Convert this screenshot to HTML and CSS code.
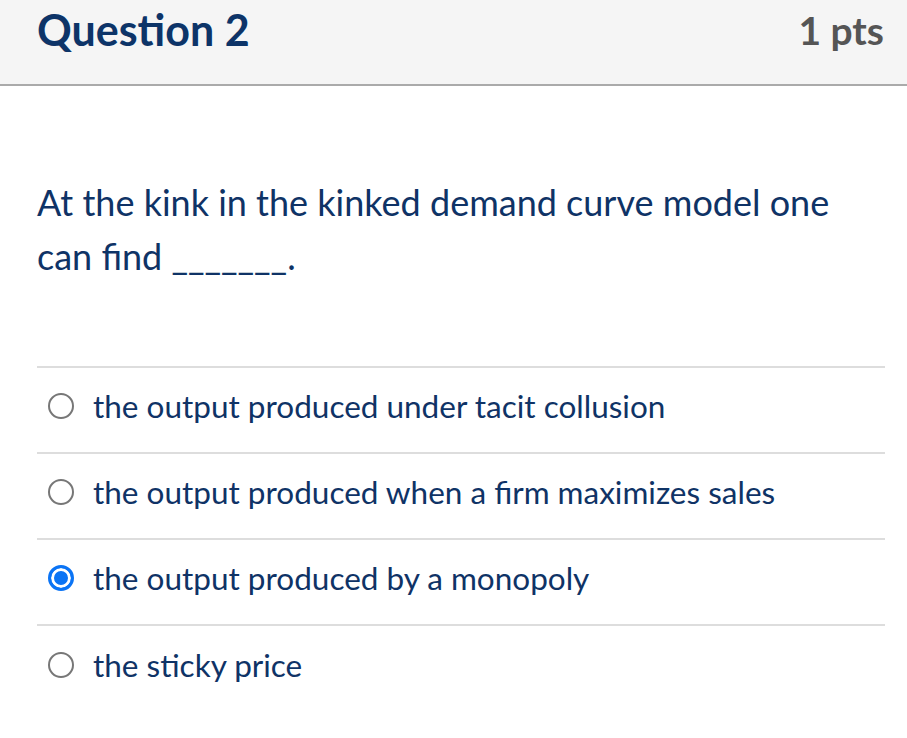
FILE: index.html
```html
<!DOCTYPE html>
<html lang="en">
<head>
  <meta charset="UTF-8">
  <meta name="viewport" content="width=device-width, initial-scale=1.0">
  <title>Question 2</title>
  <link rel="stylesheet" href="styles.css">
</head>
<body>
  <div class="question">
    <div class="question-header">
      <h2 class="question-title">Question 2</h2>
      <span class="question-points">1 pts</span>
    </div>
    <div class="question-body">
      <p class="question-text">At the kink in the kinked demand curve model one can find _______.</p>
      <div class="answers">
        <label class="answer"><span class="radio"></span>the output produced under tacit collusion</label>
        <label class="answer"><span class="radio"></span>the output produced when a firm maximizes sales</label>
        <label class="answer"><span class="radio checked"></span>the output produced by a monopoly</label>
        <label class="answer"><span class="radio"></span>the sticky price</label>
      </div>
    </div>
  </div>
</body>
</html>
```

FILE: styles.css
```css
* {
  margin: 0;
  padding: 0;
  box-sizing: border-box;
}

body {
  background: #ffffff;
  font-family: 'Lato', 'Noto Sans', sans-serif;
  color: #0f3366;
}

.question-header {
  display: flex;
  justify-content: space-between;
  align-items: flex-start;
  height: 86px;
  padding: 4px 23px 0 37px;
  background: #f5f5f5;
  border-bottom: 2px solid #aaaaaa;
}

.question-title {
  font-size: 43px;
  font-weight: 700;
  line-height: 52px;
  color: #0d3468;
}

.question-points {
  font-size: 39px;
  font-weight: 700;
  line-height: 52px;
  color: #555555;
}

.question-body {
  padding: 0 22px 0 37px;
}

.question-text {
  padding-top: 89px;
  font-size: 36px;
  line-height: 54px;
  margin-bottom: 83px;
}

.answers {
  border-top: 2px solid #dddddd;
}

.answer {
  display: flex;
  align-items: center;
  height: 86px;
  padding-bottom: 8px;
  border-bottom: 2px solid #dddddd;
  font-size: 31.5px;
  color: #0f3366;
}

.answer:last-child {
  border-bottom: none;
}

.radio {
  width: 26px;
  height: 26px;
  border: 2.5px solid #777777;
  border-radius: 50%;
  margin: 0 19px 0 11px;
  flex-shrink: 0;
}

.radio.checked {
  border: 3px solid #0b74f5;
  background: #0b74f5;
  box-shadow: inset 0 0 0 3px #ffffff;
}
```
